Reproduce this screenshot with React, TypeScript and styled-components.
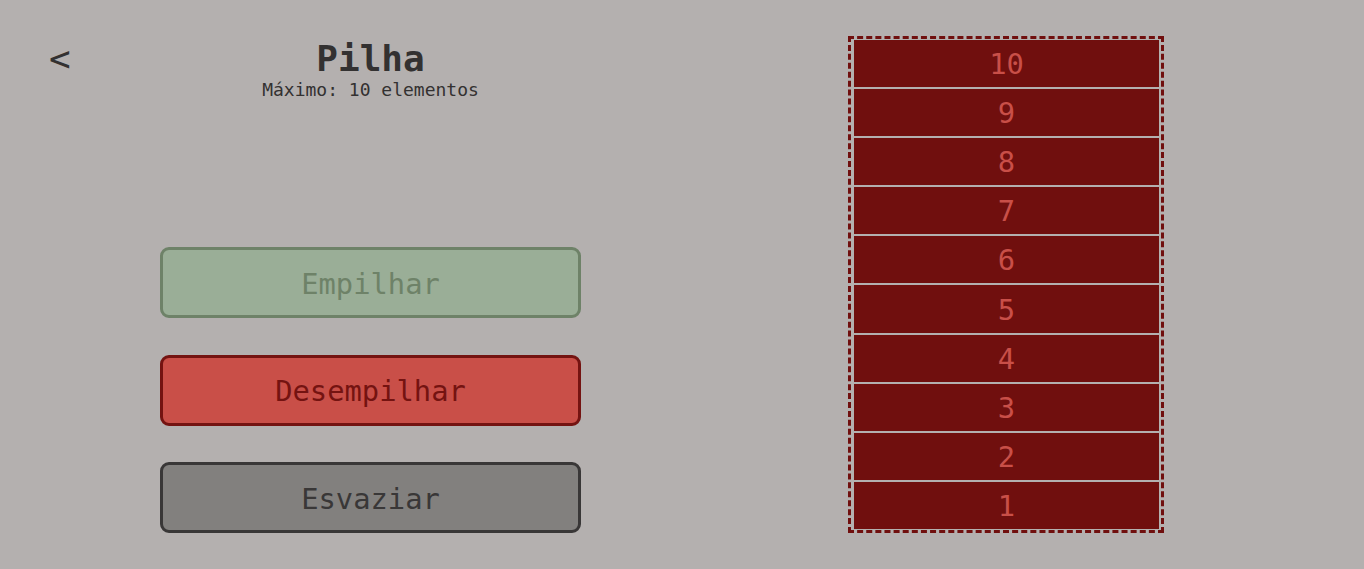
import React from "react";
import styled, { createGlobalStyle } from "styled-components";

const GlobalStyle = createGlobalStyle`
  html, body {
    margin: 0;
    padding: 0;
    background: #b4b0af;
    font-family: "DejaVu Sans Mono", "Liberation Mono", monospace;
  }
`;

const Page = styled.div`
  display: flex;
  width: 1364px;
  height: 569px;
  background: #b4b0af;
  color: #333131;
`;

const ControlPanel = styled.section`
  width: 741px;
  display: flex;
  flex-direction: column;
  align-items: center;
`;

const Header = styled.header`
  width: 100%;
  display: grid;
  grid-template-columns: 1fr auto 1fr;
  align-items: start;
  padding-top: 40px;
  box-sizing: border-box;
`;

const BackButton = styled.button`
  justify-self: start;
  margin-left: 49px;
  margin-top: 0;
  padding: 0;
  border: none;
  background: none;
  color: #333131;
  font-family: inherit;
  font-size: 36px;
  line-height: 38px;
  cursor: pointer;
`;

const TitleBlock = styled.div`
  display: flex;
  flex-direction: column;
  align-items: center;
`;

const Title = styled.h1`
  margin: 0;
  font-size: 36px;
  font-weight: bold;
  line-height: 38px;
`;

const Subtitle = styled.p`
  margin: 0 0 0;
  font-size: 18px;
  line-height: 21px;
  padding-top: 1px;
`;

const Actions = styled.div`
  display: flex;
  flex-direction: column;
  gap: 36.5px;
  margin-top: 147px;
`;

type Variant = "push" | "pop" | "clear";

const palette: Record<Variant, { bg: string; fg: string }> = {
  push: { bg: "#9aae97", fg: "#6e8268" },
  pop: { bg: "#c94f48", fg: "#741311" },
  clear: { bg: "#82807e", fg: "#393737" },
};

const ActionButton = styled.button<{ $variant: Variant }>`
  width: 421px;
  height: 71px;
  box-sizing: border-box;
  border: 3px solid ${(p) => palette[p.$variant].fg};
  border-radius: 9px;
  background: ${(p) => palette[p.$variant].bg};
  color: ${(p) => palette[p.$variant].fg};
  font-family: inherit;
  font-size: 28.8px;
  padding: 2px 0 0;
  cursor: pointer;
`;

const StackPanel = styled.section`
  padding-left: 107px;
  padding-top: 36px;
`;

const StackFrame = styled.div`
  width: 316px;
  box-sizing: border-box;
  border: 3px dashed #700f0e;
  padding: 1px 2px 1px 3px;
  display: flex;
  flex-direction: column;
  gap: 2px;
`;

const Cell = styled.div`
  height: 47.1px;
  background: #700f0e;
  color: #c94f48;
  font-size: 28.8px;
  display: flex;
  align-items: center;
  justify-content: center;
  padding-top: 1px;
  box-sizing: border-box;
`;

const items = [10, 9, 8, 7, 6, 5, 4, 3, 2, 1];

export default function App() {
  return (
    <>
      <GlobalStyle />
      <Page>
        <ControlPanel>
          <Header>
            <BackButton>&lt;</BackButton>
            <TitleBlock>
              <Title>Pilha</Title>
              <Subtitle>Máximo: 10 elementos</Subtitle>
            </TitleBlock>
            <span />
          </Header>
          <Actions>
            <ActionButton $variant="push">Empilhar</ActionButton>
            <ActionButton $variant="pop">Desempilhar</ActionButton>
            <ActionButton $variant="clear">Esvaziar</ActionButton>
          </Actions>
        </ControlPanel>
        <StackPanel>
          <StackFrame>
            {items.map((n) => (
              <Cell key={n}>{n}</Cell>
            ))}
          </StackFrame>
        </StackPanel>
      </Page>
    </>
  );
}
